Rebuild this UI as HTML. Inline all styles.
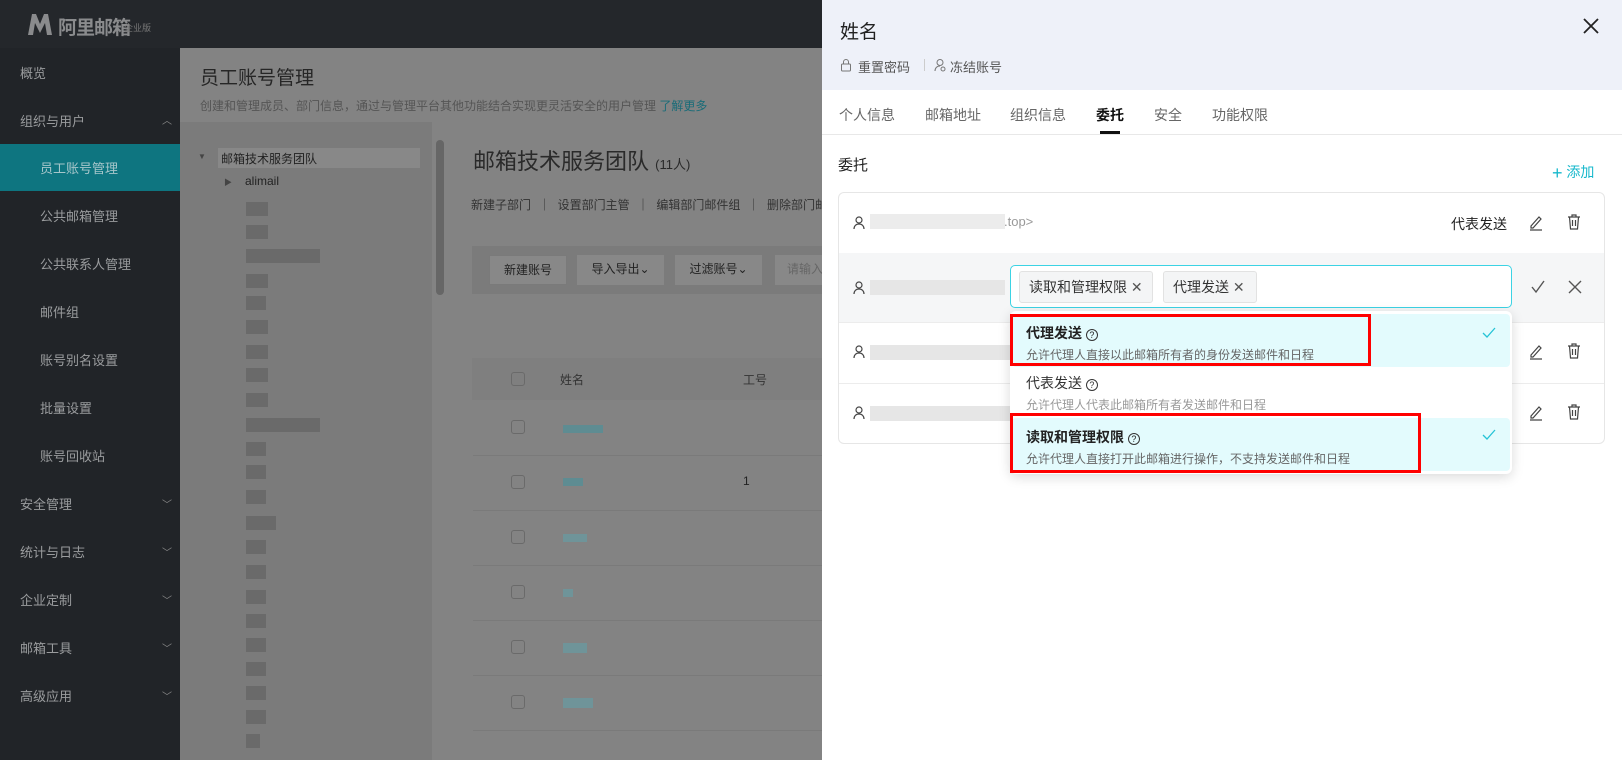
<!DOCTYPE html>
<html><head><meta charset="utf-8"><style>
*{box-sizing:border-box;margin:0;padding:0}
body{width:1622px;height:760px;overflow:hidden;position:relative;font-family:"Liberation Sans","Noto Sans CJK SC",sans-serif;background:#838383}
.abs{position:absolute}
.top{left:0;top:0;width:822px;height:48px;background:#24272b}
.side{left:0;top:48px;width:180px;height:712px;background:#212428}
.si{position:absolute;left:20px;font-size:13px;color:#9a9c9e}
.si.sub{left:40px}
.chev{position:absolute;left:162px;font-size:10px;color:#888}
.main{left:180px;top:48px;width:642px;height:712px;background:#838383}
.tree{left:180px;top:122px;width:252px;height:638px;background:#7b7b7b}
.blk{position:absolute;background:#6a6a6a}
.panel{left:822px;top:0;width:800px;height:760px;background:#fff}
.ph{left:822px;top:0;width:800px;height:90px;background:#eef1f9}
.tab{position:absolute;top:105px;font-size:14px;color:#666}
.ico{position:absolute}
</style></head><body>
<div class="abs top"></div>
<svg class="ico" style="left:27px;top:13px" width="26" height="23" viewBox="0 0 26 23"><path d="M1 22L5 1h4l4 10 4-10h4l4 21h-5l-2-12-5 10-5-10-2 12z" fill="#8a8b8d"/></svg>
<div class="abs" style="left:58px;top:13px;font-size:19px;color:#8a8b8d;font-weight:bold;letter-spacing:-1px">阿里邮箱</div>
<div class="abs" style="left:124px;top:21px;font-size:9px;color:#777">企业版</div>
<div class="abs side"></div>
<div class="abs" style="left:0;top:144px;width:180px;height:47px;background:#0e7580"></div>
<div class="si" style="top:63px">概览</div>
<div class="si" style="top:111px">组织与用户</div><div class="chev" style="top:112px">︿</div>
<div class="si sub" style="top:158px;color:#a6c6ca">员工账号管理</div>
<div class="si sub" style="top:206px">公共邮箱管理</div>
<div class="si sub" style="top:254px">公共联系人管理</div>
<div class="si sub" style="top:302px">邮件组</div>
<div class="si sub" style="top:350px">账号别名设置</div>
<div class="si sub" style="top:398px">批量设置</div>
<div class="si sub" style="top:446px">账号回收站</div>
<div class="si" style="top:494px">安全管理</div><div class="chev" style="top:496px">﹀</div>
<div class="si" style="top:542px">统计与日志</div><div class="chev" style="top:544px">﹀</div>
<div class="si" style="top:590px">企业定制</div><div class="chev" style="top:592px">﹀</div>
<div class="si" style="top:638px">邮箱工具</div><div class="chev" style="top:640px">﹀</div>
<div class="si" style="top:686px">高级应用</div><div class="chev" style="top:688px">﹀</div>

<div class="abs main"></div>
<div class="abs" style="left:200px;top:63px;font-size:19px;color:#262626">员工账号管理</div>
<div class="abs" style="left:200px;top:97px;font-size:12px;color:#555">创建和管理成员、部门信息，通过与管理平台其他功能结合实现更灵活安全的用户管理 <span style="color:#1a6c78">了解更多</span></div>
<div class="abs tree"></div>
<div class="abs" style="left:198px;top:152px;font-size:8px;color:#444">▼</div>
<div class="abs" style="left:218px;top:148px;width:202px;height:20px;background:#888"></div>
<div class="abs" style="left:221px;top:150px;font-size:12px;color:#222">邮箱技术服务团队</div>
<div class="abs" style="left:224px;top:177px;font-size:8px;color:#444">▶</div>
<div class="abs" style="left:245px;top:174px;font-size:12px;color:#222">alimail</div>
<div class="blk" style="left:246px;top:202px;width:22px;height:14px"></div>
<div class="blk" style="left:246px;top:225px;width:22px;height:14px"></div>
<div class="blk" style="left:246px;top:249px;width:74px;height:14px"></div>
<div class="blk" style="left:246px;top:274px;width:22px;height:14px"></div>
<div class="blk" style="left:246px;top:296px;width:20px;height:14px"></div>
<div class="blk" style="left:246px;top:320px;width:22px;height:14px"></div>
<div class="blk" style="left:246px;top:345px;width:22px;height:14px"></div>
<div class="blk" style="left:246px;top:368px;width:22px;height:14px"></div>
<div class="blk" style="left:246px;top:393px;width:22px;height:14px"></div>
<div class="blk" style="left:246px;top:418px;width:74px;height:14px"></div>
<div class="blk" style="left:246px;top:442px;width:20px;height:14px"></div>
<div class="blk" style="left:246px;top:465px;width:20px;height:14px"></div>
<div class="blk" style="left:246px;top:490px;width:20px;height:14px"></div>
<div class="blk" style="left:246px;top:516px;width:30px;height:14px"></div>
<div class="blk" style="left:246px;top:540px;width:20px;height:14px"></div>
<div class="blk" style="left:246px;top:565px;width:20px;height:14px"></div>
<div class="blk" style="left:246px;top:590px;width:20px;height:14px"></div>
<div class="blk" style="left:246px;top:614px;width:20px;height:14px"></div>
<div class="blk" style="left:246px;top:638px;width:20px;height:14px"></div>
<div class="blk" style="left:246px;top:662px;width:20px;height:14px"></div>
<div class="blk" style="left:246px;top:686px;width:20px;height:14px"></div>
<div class="blk" style="left:246px;top:710px;width:20px;height:14px"></div>
<div class="blk" style="left:246px;top:734px;width:14px;height:14px"></div>
<div class="abs" style="left:436px;top:140px;width:8px;height:155px;background:#666;border-radius:4px"></div>
<div class="abs" style="left:473px;top:144px;font-size:22px;color:#2a2a2a">邮箱技术服务团队 <span style="font-size:13px">(11人)</span></div>
<div class="abs" style="left:471px;top:196px;font-size:12px;color:#333;word-spacing:4px">新建子部门 ｜ 设置部门主管 ｜ 编辑部门邮件组 ｜ 删除部门邮件组</div>
<div class="abs" style="left:472px;top:246px;width:350px;height:48px;background:#7b7b7b"></div>
<div class="abs" style="left:489px;top:255px;width:78px;height:30px;background:#888;border:1px solid #7a7a7a;font-size:12px;color:#222;text-align:center;line-height:28px">新建账号</div>
<div class="abs" style="left:577px;top:255px;width:87px;height:30px;background:#888;font-size:12px;color:#222;text-align:center;line-height:28px">导入导出⌄</div>
<div class="abs" style="left:675px;top:255px;width:87px;height:30px;background:#888;font-size:12px;color:#222;text-align:center;line-height:28px">过滤账号⌄</div>
<div class="abs" style="left:775px;top:255px;width:60px;height:30px;background:#888;font-size:12px;color:#666;line-height:28px;padding-left:12px">请输入</div>
<div class="abs" style="left:472px;top:358px;width:350px;height:42px;background:#7f7f7f"></div>
<div class="abs" style="left:511px;top:372px;width:14px;height:14px;border:1px solid #6a6a6a;border-radius:3px"></div>
<div class="abs" style="left:560px;top:371px;font-size:12px;color:#333">姓名</div>
<div class="abs" style="left:743px;top:371px;font-size:12px;color:#333">工号</div>
<div class="abs" style="left:511px;top:420px;width:14px;height:14px;border:1px solid #6a6a6a;border-radius:3px"></div>
<div class="abs" style="left:563px;top:425px;width:40px;height:8px;background:#5e8c92"></div>
<div class="abs" style="left:511px;top:475px;width:14px;height:14px;border:1px solid #6a6a6a;border-radius:3px"></div>
<div class="abs" style="left:563px;top:478px;width:20px;height:8px;background:#5e8c92"></div>
<div class="abs" style="left:743px;top:474px;font-size:12px;color:#222">1</div>
<div class="abs" style="left:511px;top:530px;width:14px;height:14px;border:1px solid #6a6a6a;border-radius:3px"></div>
<div class="abs" style="left:563px;top:534px;width:24px;height:8px;background:#6f9499"></div>
<div class="abs" style="left:511px;top:585px;width:14px;height:14px;border:1px solid #6a6a6a;border-radius:3px"></div>
<div class="abs" style="left:563px;top:589px;width:10px;height:8px;background:#6f9499"></div>
<div class="abs" style="left:511px;top:640px;width:14px;height:14px;border:1px solid #6a6a6a;border-radius:3px"></div>
<div class="abs" style="left:563px;top:643px;width:24px;height:10px;background:#6f9499"></div>
<div class="abs" style="left:511px;top:695px;width:14px;height:14px;border:1px solid #6a6a6a;border-radius:3px"></div>
<div class="abs" style="left:563px;top:698px;width:30px;height:10px;background:#6f9499"></div>
<div class="abs" style="left:473px;top:455px;width:349px;height:1px;background:#7a7a7a"></div>
<div class="abs" style="left:473px;top:510px;width:349px;height:1px;background:#7a7a7a"></div>
<div class="abs" style="left:473px;top:565px;width:349px;height:1px;background:#7a7a7a"></div>
<div class="abs" style="left:473px;top:620px;width:349px;height:1px;background:#7a7a7a"></div>
<div class="abs" style="left:473px;top:675px;width:349px;height:1px;background:#7a7a7a"></div>
<div class="abs" style="left:473px;top:730px;width:349px;height:1px;background:#7a7a7a"></div>

<!-- panel -->
<div class="abs panel"></div>
<div class="abs ph"></div>
<div class="abs" style="left:840px;top:17px;font-size:19px;color:#222">姓名</div>
<svg class="ico" style="left:1582px;top:17px" width="18" height="18" viewBox="0 0 18 18"><path d="M2 2L16 16M16 2L2 16" stroke="#222" stroke-width="1.8"/></svg>
<svg class="ico" style="left:840px;top:58px" width="12" height="14" viewBox="0 0 12 14"><rect x="1.5" y="6" width="9" height="7" rx="1" fill="none" stroke="#777"/><path d="M3.5 6V4a2.5 2.5 0 0 1 5 0v2" fill="none" stroke="#777"/></svg>
<div class="abs" style="left:858px;top:57px;font-size:13px;color:#555">重置密码</div>
<div class="abs" style="left:924px;top:59px;width:1px;height:12px;background:#ccc"></div>
<svg class="ico" style="left:934px;top:58px" width="12" height="14" viewBox="0 0 12 14"><circle cx="6" cy="4.5" r="3" fill="none" stroke="#777"/><path d="M1 13c0-3 2-5 5-5" fill="none" stroke="#777"/><circle cx="9" cy="11" r="2" fill="none" stroke="#777"/></svg>
<div class="abs" style="left:950px;top:57px;font-size:13px;color:#555">冻结账号</div>
<div class="tab" style="left:839px">个人信息</div>
<div class="tab" style="left:925px">邮箱地址</div>
<div class="tab" style="left:1010px">组织信息</div>
<div class="tab" style="left:1096px;color:#111;font-weight:bold">委托</div>
<div class="abs" style="left:1100px;top:131px;width:20px;height:3px;background:#111"></div>
<div class="tab" style="left:1154px">安全</div>
<div class="tab" style="left:1212px">功能权限</div>
<div class="abs" style="left:822px;top:134px;width:800px;height:1px;background:#e8e8e8"></div>
<div class="abs" style="left:838px;top:154px;font-size:15px;color:#222">委托</div>
<div class="abs" style="left:1552px;top:162px;font-size:14px;color:#17b8cc"><span style="font-size:18px;vertical-align:-2px">+</span> 添加</div>
<div class="abs" style="left:838px;top:192px;width:767px;height:252px;border:1px solid #e6e6e6;border-radius:6px"></div>
<div class="abs" style="left:839px;top:253px;width:765px;height:69px;background:#f5f6f7"></div>
<div class="abs" style="left:839px;top:322px;width:765px;height:1px;background:#ececec"></div>
<div class="abs" style="left:839px;top:383px;width:765px;height:1px;background:#ececec"></div>
<svg class="ico" style="left:853px;top:216px" width="12" height="14" viewBox="0 0 12 14"><circle cx="6" cy="4" r="3" fill="none" stroke="#444" stroke-width="1.2"/><path d="M1 13c0-3 2-5 5-5s5 2 5 5" fill="none" stroke="#444" stroke-width="1.2"/></svg>
<div class="abs" style="left:870px;top:214px;width:135px;height:15px;background:#ececec"></div>
<div class="abs" style="left:1004px;top:214px;font-size:13px;color:#999">.top&gt;</div>
<div class="abs" style="left:1451px;top:214px;font-size:14px;color:#222">代表发送</div>
<svg class="ico" style="left:1528px;top:214px" width="16" height="18" viewBox="0 0 16 18"><path d="M3 12L11 3l2 2-8 9H3z M2 16h12" fill="none" stroke="#444" stroke-width="1.2"/></svg>
<svg class="ico" style="left:1566px;top:213px" width="16" height="18" viewBox="0 0 16 18"><path d="M2 4h12M6 4V2h4v2M3.5 4l1 12h7l1-12M6.5 7v6M9.5 7v6" fill="none" stroke="#444" stroke-width="1.2"/></svg>
<svg class="ico" style="left:853px;top:281px" width="12" height="14" viewBox="0 0 12 14"><circle cx="6" cy="4" r="3" fill="none" stroke="#444" stroke-width="1.2"/><path d="M1 13c0-3 2-5 5-5s5 2 5 5" fill="none" stroke="#444" stroke-width="1.2"/></svg>
<div class="abs" style="left:870px;top:280px;width:135px;height:15px;background:#e6e6e6"></div>
<svg class="ico" style="left:853px;top:345px" width="12" height="14" viewBox="0 0 12 14"><circle cx="6" cy="4" r="3" fill="none" stroke="#444" stroke-width="1.2"/><path d="M1 13c0-3 2-5 5-5s5 2 5 5" fill="none" stroke="#444" stroke-width="1.2"/></svg>
<div class="abs" style="left:870px;top:345px;width:140px;height:15px;background:#e6e6e6"></div>
<svg class="ico" style="left:853px;top:406px" width="12" height="14" viewBox="0 0 12 14"><circle cx="6" cy="4" r="3" fill="none" stroke="#444" stroke-width="1.2"/><path d="M1 13c0-3 2-5 5-5s5 2 5 5" fill="none" stroke="#444" stroke-width="1.2"/></svg>
<div class="abs" style="left:870px;top:406px;width:140px;height:15px;background:#e6e6e6"></div>
<svg class="ico" style="left:1528px;top:343px" width="16" height="18" viewBox="0 0 16 18"><path d="M3 12L11 3l2 2-8 9H3z M2 16h12" fill="none" stroke="#444" stroke-width="1.2"/></svg>
<svg class="ico" style="left:1566px;top:342px" width="16" height="18" viewBox="0 0 16 18"><path d="M2 4h12M6 4V2h4v2M3.5 4l1 12h7l1-12M6.5 7v6M9.5 7v6" fill="none" stroke="#444" stroke-width="1.2"/></svg>
<svg class="ico" style="left:1528px;top:404px" width="16" height="18" viewBox="0 0 16 18"><path d="M3 12L11 3l2 2-8 9H3z M2 16h12" fill="none" stroke="#444" stroke-width="1.2"/></svg>
<svg class="ico" style="left:1566px;top:403px" width="16" height="18" viewBox="0 0 16 18"><path d="M2 4h12M6 4V2h4v2M3.5 4l1 12h7l1-12M6.5 7v6M9.5 7v6" fill="none" stroke="#444" stroke-width="1.2"/></svg>
<!-- select -->
<div class="abs" style="left:1010px;top:265px;width:502px;height:43px;background:#fff;border:1px solid #3cd3e4;border-radius:5px"></div>
<div class="abs" style="left:1019px;top:271px;width:134px;height:32px;background:#f4f5f6;border:1px solid #e2e2e2;border-radius:3px;font-size:14px;color:#333;line-height:30px;padding-left:9px">读取和管理权限 <span style="color:#555">✕</span></div>
<div class="abs" style="left:1163px;top:271px;width:94px;height:32px;background:#f4f5f6;border:1px solid #e2e2e2;border-radius:3px;font-size:14px;color:#333;line-height:30px;padding-left:9px">代理发送 <span style="color:#555">✕</span></div>
<svg class="ico" style="left:1530px;top:280px" width="16" height="14" viewBox="0 0 16 14"><path d="M2 7l4 5 8-11" fill="none" stroke="#555" stroke-width="1.4"/></svg>
<svg class="ico" style="left:1568px;top:280px" width="14" height="14" viewBox="0 0 14 14"><path d="M1 1l12 12M13 1L1 13" stroke="#555" stroke-width="1.4"/></svg>
<!-- dropdown -->
<div class="abs" style="left:1010px;top:311px;width:502px;height:163px;background:#fff;border-radius:6px;box-shadow:0 3px 12px rgba(0,0,0,.15)"></div>
<div class="abs" style="left:1012px;top:314px;width:498px;height:53px;background:#e3fbfd;border-radius:4px"></div>
<div class="abs" style="left:1012px;top:418px;width:498px;height:53px;background:#e3fbfd;border-radius:4px"></div>
<div class="abs" style="left:1026px;top:323px;font-size:14px;font-weight:bold;color:#222">代理发送 <span style="font-weight:normal;font-size:12px;display:inline-block;width:12px;height:12px;border:1px solid #333;border-radius:50%;line-height:10px;text-align:center;font-size:9px">?</span></div>
<div class="abs" style="left:1026px;top:346px;font-size:12px;color:#666">允许代理人直接以此邮箱所有者的身份发送邮件和日程</div>
<div class="abs" style="left:1026px;top:373px;font-size:14px;color:#333">代表发送 <span style="font-size:9px;display:inline-block;width:12px;height:12px;border:1px solid #333;border-radius:50%;line-height:10px;text-align:center">?</span></div>
<div class="abs" style="left:1026px;top:396px;font-size:12px;color:#999">允许代理人代表此邮箱所有者发送邮件和日程</div>
<div class="abs" style="left:1026px;top:427px;font-size:14px;font-weight:bold;color:#222">读取和管理权限 <span style="font-weight:normal;font-size:9px;display:inline-block;width:12px;height:12px;border:1px solid #333;border-radius:50%;line-height:10px;text-align:center">?</span></div>
<div class="abs" style="left:1026px;top:450px;font-size:12px;color:#666">允许代理人直接打开此邮箱进行操作，不支持发送邮件和日程</div>
<svg class="ico" style="left:1482px;top:327px" width="14" height="12" viewBox="0 0 14 12"><path d="M1 6l4 4 8-9" fill="none" stroke="#26c3d6" stroke-width="1.3"/></svg>
<svg class="ico" style="left:1482px;top:429px" width="14" height="12" viewBox="0 0 14 12"><path d="M1 6l4 4 8-9" fill="none" stroke="#26c3d6" stroke-width="1.3"/></svg>
<div class="abs" style="left:1010px;top:314px;width:361px;height:52px;border:3px solid #f00"></div>
<div class="abs" style="left:1010px;top:413px;width:411px;height:60px;border:3px solid #f00"></div>
</body></html>
